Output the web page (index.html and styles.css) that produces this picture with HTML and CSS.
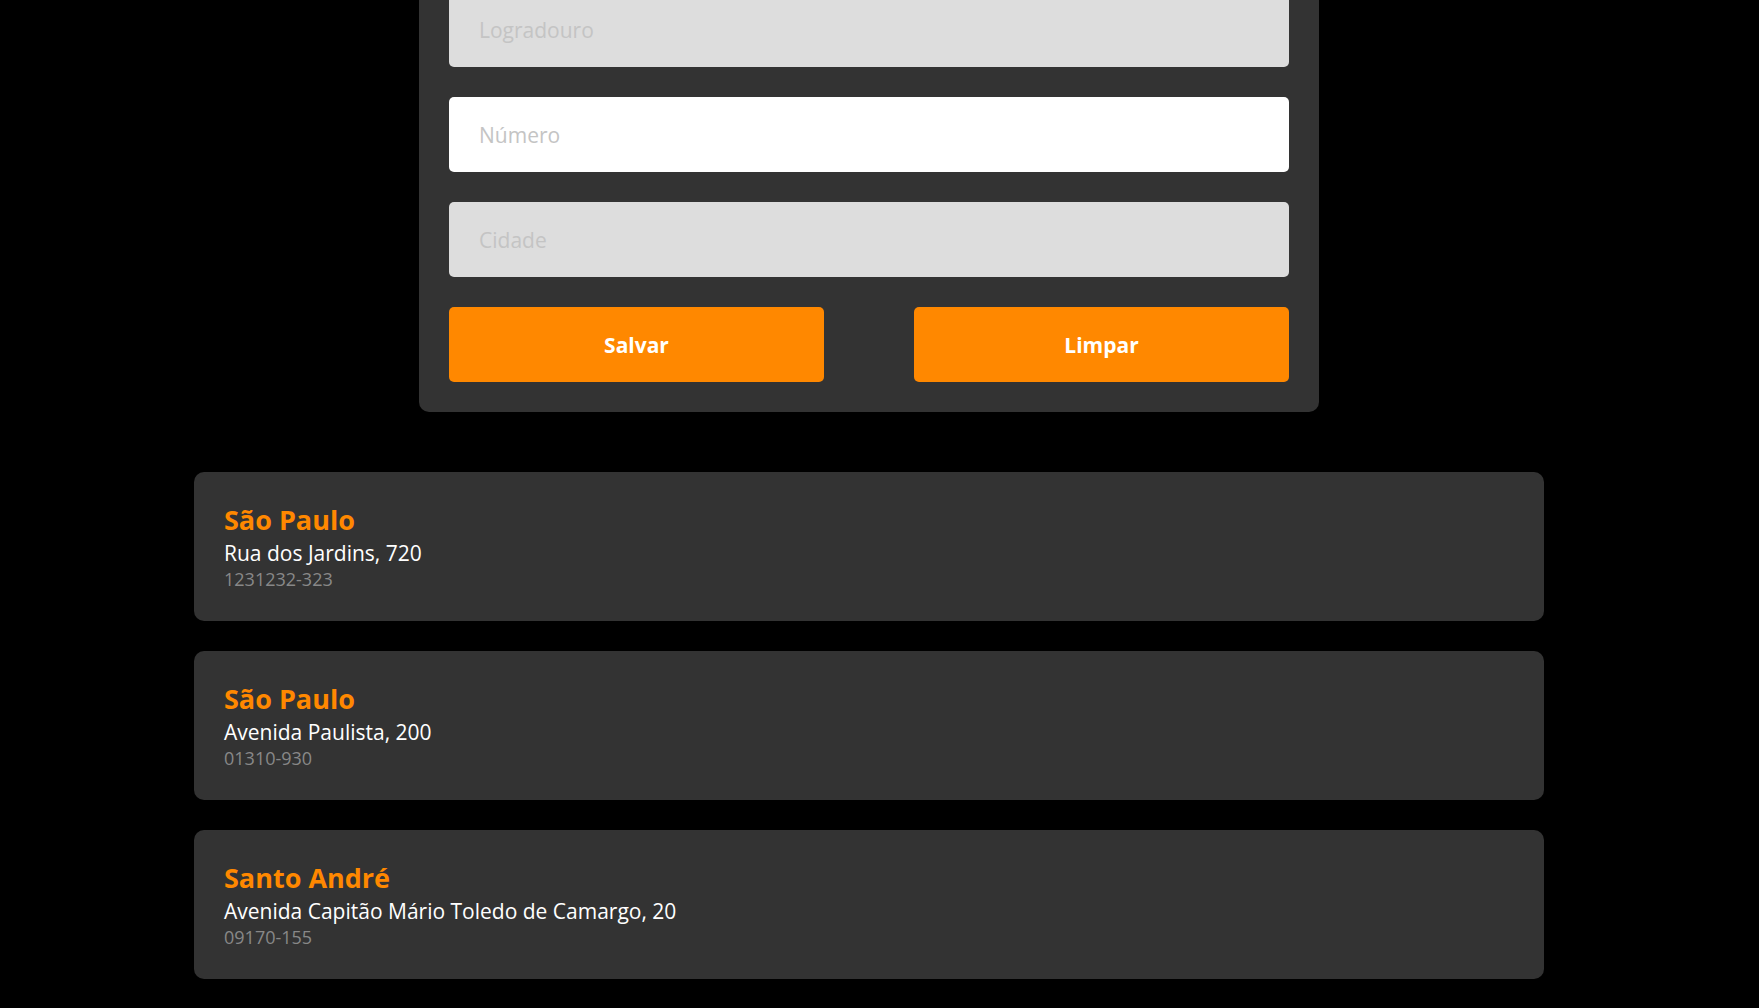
FILE: index.html
```html
<!DOCTYPE html>
<html lang="pt-BR">
<head>
<meta charset="utf-8">
<title>Endereços</title>
<link rel="stylesheet" href="styles.css">
</head>
<body>
<main class="page">
  <form class="form-card">
    <input class="field field-locked" type="text" placeholder="Logradouro" disabled>
    <input class="field" type="text" placeholder="Número">
    <input class="field field-locked" type="text" placeholder="Cidade" disabled>
    <div class="actions">
      <button class="btn" type="button">Salvar</button>
      <button class="btn" type="button">Limpar</button>
    </div>
  </form>

  <section class="list">
    <article class="address-card">
      <h3 class="city">São Paulo</h3>
      <p class="street">Rua dos Jardins, 720</p>
      <p class="cep">1231232-323</p>
    </article>
    <article class="address-card">
      <h3 class="city">São Paulo</h3>
      <p class="street">Avenida Paulista, 200</p>
      <p class="cep">01310-930</p>
    </article>
    <article class="address-card">
      <h3 class="city">Santo André</h3>
      <p class="street">Avenida Capitão Mário Toledo de Camargo, 20</p>
      <p class="cep">09170-155</p>
    </article>
  </section>
</main>
</body>
</html>
```

FILE: styles.css
```css
* {
  box-sizing: border-box;
}

html, body {
  margin: 0;
  background: #000;
}

body {
  padding-right: 21px;
  font-family: "Open Sans", "Noto Sans", sans-serif;
  color: #fff;
  overflow: hidden;
}

.page {
  display: flex;
  flex-direction: column;
  align-items: center;
}

.form-card {
  width: 900px;
  margin-top: -38px;
  padding: 30px;
  background: #333;
  border-radius: 10px;
  display: flex;
  flex-direction: column;
  gap: 30px;
}

.field {
  display: block;
  width: 100%;
  height: 75px;
  padding: 0 30px;
  border: none;
  border-radius: 5px;
  background: #fff;
  font-family: inherit;
  font-size: 21px;
  color: #333;
  outline: none;
}

.field::placeholder {
  color: #c4c4c4;
  opacity: 1;
}

.field-locked {
  background: #ddd;
}

.actions {
  display: flex;
  justify-content: space-between;
}

.btn {
  width: 375px;
  height: 75px;
  border: none;
  border-radius: 5px;
  background: #ff8800;
  color: #fff;
  font-family: inherit;
  font-size: 21px;
  font-weight: 700;
  cursor: pointer;
}

.list {
  width: 1350px;
  margin-top: 60px;
  display: flex;
  flex-direction: column;
  gap: 30px;
}

.address-card {
  background: #333;
  border-radius: 10px;
  padding: 31px 30px 32px;
}

.city {
  margin: 0;
  font-size: 27px;
  line-height: 34px;
  font-weight: 700;
  color: #ff8800;
}

.street {
  margin: 0;
  font-size: 21px;
  line-height: 32px;
  color: #fff;
}

.cep {
  margin: 0;
  font-size: 18px;
  line-height: 20px;
  color: #888;
}
```
